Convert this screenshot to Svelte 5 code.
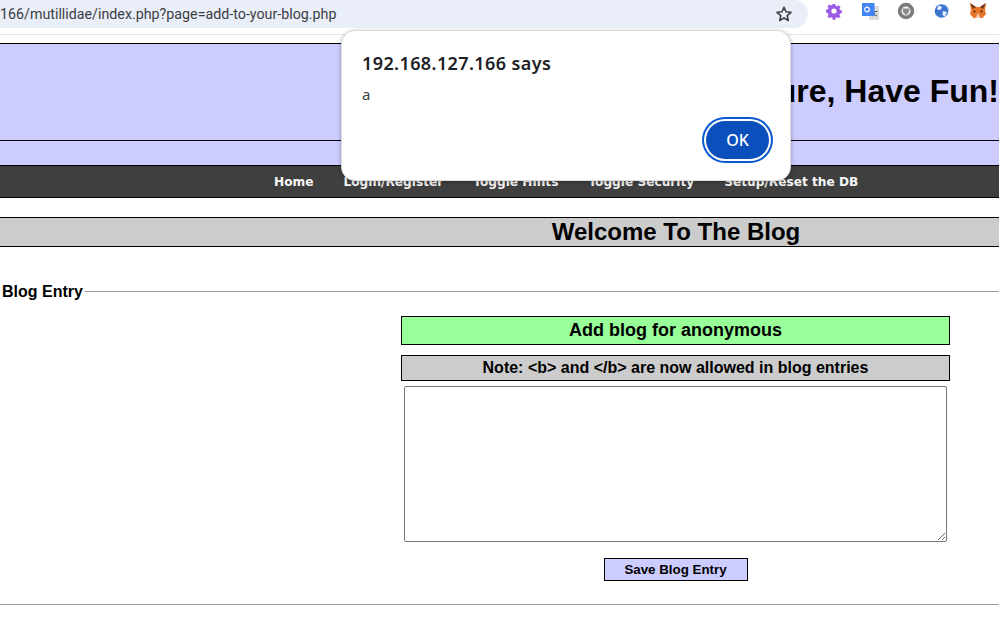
<script>
	const links = ['Home', 'Login/Register', 'Toggle Hints', 'Toggle Security', 'Setup/Reset the DB'];
	let entry = $state('');
</script>

<div class="page">
	<div class="toolbar">
		<div class="address">
			<span class="url">166/mutillidae/index.php?page=add-to-your-blog.php</span>
			<svg class="star" width="18" height="18" viewBox="0 0 18 18">
				<path d="M9 2.200l2 4.600 5 .5-3.800 3.300 1.100 4.900L9 13l-4.300 2.500 1.100-4.900L2 7.300l5-.5z" fill="none" stroke="#3c4043" stroke-width="1.600" stroke-linejoin="round" />
			</svg>
		</div>
		<div class="extensions">
			<svg width="18" height="18" viewBox="0 0 18 18">
				<path d="M7.500 1h3l.4 2.200 1.400.6 1.900-1.200 2.100 2.100-1.200 1.900.6 1.400 2.200.4v3l-2.200.4-.6 1.400 1.200 1.900-2.100 2.100-1.900-1.200-1.400.6-.4 2.200h-3l-.4-2.200-1.400-.6-1.900 1.200-2.100-2.100 1.200-1.900-.6-1.400L0 10.500v-3l2.200-.4.6-1.400-1.200-1.900 2.100-2.100 1.900 1.200 1.400-.6z" transform="translate(1 1) scale(.89)" fill="#9b5de5" />
				<circle cx="9" cy="9" r="2.600" fill="#fff" />
			</svg>
			<svg width="18" height="18" viewBox="0 0 18 18">
				<rect x="8" y="4" width="10" height="14" fill="#dcdcdc" />
				<path d="M11 9.500h5.500M13.800 9.500c-.3 2.200-1.200 3.500-2.600 4.500M12.200 11c.7 1.300 2 2.500 3.800 3" stroke="#55606b" stroke-width="1.100" fill="none" />
				<path d="M1 1h12.500v13H1z" fill="#4285f4" />
				<circle cx="6" cy="7.500" r="2.300" fill="none" stroke="#fff" stroke-width="1.200" />
			</svg>
			<svg width="18" height="18" viewBox="0 0 18 18">
				<circle cx="9" cy="9" r="6.400" fill="#f4f4f4" stroke="#7b7b7b" stroke-width="3.600" />
				<path d="M5.500 6.500h7c0 3.500-1.500 5.500-3.500 6.500-2-1-3.500-3-3.500-6.500z" fill="#8c8c8c" />
			</svg>
			<svg width="18" height="18" viewBox="0 0 18 18">
				<circle cx="8.500" cy="9" r="6.800" fill="#3f74d0" />
				<path d="M6 3.500l3 1.500-1 2.500-3 .5-1-2zM10 9l4 1-2 4.500-2.500-1.500z" fill="#e8effa" />
				<path d="M11 2.500c3 .8 5 3.500 5 6.500" stroke="#b8cbea" fill="none" />
			</svg>
			<svg width="18" height="18" viewBox="0 0 18 18">
				<path d="M1 1l6 4h4l6-4-1 7 1 4-4 4.500-2-1H7l-2 1L1 12l1-4z" fill="#e8752a" />
				<path d="M1 1l6 4-3 2zM17 1l-6 4 3 2z" fill="#6b3a22" />
				<path d="M7 15.500L9 11l2 4.500z" fill="#f2dccb" />
				<circle cx="5.500" cy="9.500" r="1" fill="#33261c" />
				<circle cx="12.500" cy="9.500" r="1" fill="#33261c" />
			</svg>
		</div>
	</div>

	<header class="banner">
		<div class="banner-title"><h1>Hack, Learn, Secure, Have Fun!</h1></div>
		<div class="banner-gap"></div>
	</header>

	<nav class="menu">
		{#each links as link}
			<a href="#top">{link}</a>
		{/each}
	</nav>

	<h2 class="page-title">Welcome To The Blog</h2>

	<fieldset class="entry">
		<legend>Blog Entry</legend>
		<form class="entry-form" onsubmit={(e) => e.preventDefault()}>
			<div class="add-header">Add blog for anonymous</div>
			<div class="note">Note: &lt;b&gt; and &lt;/b&gt; are now allowed in blog entries</div>
			<textarea bind:value={entry}></textarea>
			<button class="save" type="submit">Save Blog Entry</button>
		</form>
	</fieldset>

	<div class="dialog" role="alertdialog">
		<div class="dialog-title">192.168.127.166 says</div>
		<div class="dialog-msg">a</div>
		<div class="dialog-actions">
			<button class="ok" type="button">OK</button>
		</div>
	</div>
</div>

<style>
	:global(body) {
		margin: 0;
		background: #fff;
	}
	.page {
		position: relative;
		width: 999px;
		height: 618px;
		overflow: hidden;
		font-family: 'Liberation Sans', Arial, sans-serif;
		color: #000;
	}
	.toolbar {
		display: flex;
		height: 34px;
		border-bottom: 1px solid #e3e3e3;
	}
	.address {
		display: flex;
		align-items: center;
		justify-content: space-between;
		width: 808px;
		height: 28px;
		padding-right: 15px;
		box-sizing: border-box;
		background: #e9eef8;
		border-radius: 0 14px 14px 0;
	}
	.url {
		font-family: Roboto, sans-serif;
		font-size: 14.250px;
		color: #3c4043;
		white-space: nowrap;
	}
	.star {
		display: block;
	}
	.extensions {
		display: flex;
		gap: 18px;
		padding: 2px 0 0 17px;
		height: 18px;
	}
	.extensions svg {
		display: block;
		filter: blur(0.3px);
	}
	.banner {
		margin-top: 8px;
		background: #ccccff;
	}
	.banner-title {
		display: flex;
		justify-content: flex-end;
		align-items: center;
		height: 96px;
		border-top: 1px solid #000;
		border-bottom: 1px solid #000;
		overflow: hidden;
	}
	.banner-title h1 {
		margin: 0 0 2px;
		font-size: 32px;
		font-weight: 700;
		white-space: nowrap;
	}
	.banner-gap {
		height: 24px;
	}
	.menu {
		display: flex;
		gap: 30px;
		height: 31px;
		padding-left: 274px;
		align-items: center;
		background: #3f3f3f;
		border-top: 1px solid #000;
		border-bottom: 1px solid #000;
	}
	.menu a {
		font-family: 'DejaVu Sans', Verdana, sans-serif;
		font-size: 12.160px;
		font-weight: 700;
		color: #f6f6f6;
		text-decoration: none;
		white-space: nowrap;
	}
	.page-title {
		margin: 19px 0 0;
		padding-left: 353px;
		height: 28px;
		line-height: 28px;
		text-align: center;
		font-size: 24px;
		font-weight: 700;
		background: #ccc;
		border-top: 1px solid #000;
		border-bottom: 1px solid #000;
	}
	.entry {
		margin: 35px 0 0;
		padding: 0;
		border: none;
		border-top: 1px solid #999;
		border-bottom: 1px solid #999;
	}
	.entry legend {
		margin-left: 0;
		padding: 1px 2px 0;
		font-size: 16px;
		font-weight: 700;
	}
	.entry-form {
		display: flex;
		flex-direction: column;
		align-items: center;
		padding: 15px 49px 23px 401px;
	}
	.add-header {
		box-sizing: border-box;
		width: 549px;
		height: 29px;
		line-height: 27px;
		text-align: center;
		font-size: 18px;
		font-weight: 700;
		background: #99ff99;
		border: 1px solid #000;
	}
	.note {
		box-sizing: border-box;
		width: 549px;
		height: 26px;
		margin-top: 10px;
		line-height: 24px;
		text-align: center;
		font-size: 16px;
		font-weight: 700;
		background: #ccc;
		border: 1px solid #000;
	}
	textarea {
		display: block;
		box-sizing: border-box;
		width: 543px;
		height: 156px;
		margin: 5px 0 0;
		padding: 2px;
		border: 1px solid #767676;
		border-radius: 2px;
		background: #fff;
	}
	.save {
		box-sizing: border-box;
		width: 144px;
		height: 23px;
		margin-top: 16px;
		padding: 0;
		font-family: 'Liberation Sans', Arial, sans-serif;
		font-size: 13.333px;
		font-weight: 700;
		color: #000;
		background: #ccccff;
		border: 1px solid #000;
	}
	.dialog {
		position: absolute;
		left: 341px;
		top: 30px;
		box-sizing: border-box;
		width: 450px;
		height: 151px;
		padding: 20px 18px 0 20px;
		background: #fff;
		border-radius: 14px;
		border: 1px solid #dcdcdc;
		box-shadow: 0 1px 4px rgba(0, 0, 0, 0.28);
		font-family: 'Noto Sans', sans-serif;
	}
	.dialog-title {
		font-size: 18px;
		font-weight: 600;
		letter-spacing: 0.4px;
		line-height: 24px;
		color: #202124;
	}
	.dialog-msg {
		margin-top: 9px;
		font-size: 15px;
		line-height: 20px;
		color: #3c4043;
	}
	.dialog-actions {
		display: flex;
		justify-content: flex-end;
		margin-top: 14px;
	}
	.ok {
		box-sizing: border-box;
		width: 63px;
		height: 38px;
		margin: 3px;
		padding: 0;
		font-family: 'Noto Sans', sans-serif;
		font-size: 16px;
		font-weight: 500;
		color: #fff;
		background: #0b4fbc;
		border: none;
		border-radius: 19px;
		box-shadow: 0 0 0 2px #fff, 0 0 0 4px #0b57d0;
	}
</style>
